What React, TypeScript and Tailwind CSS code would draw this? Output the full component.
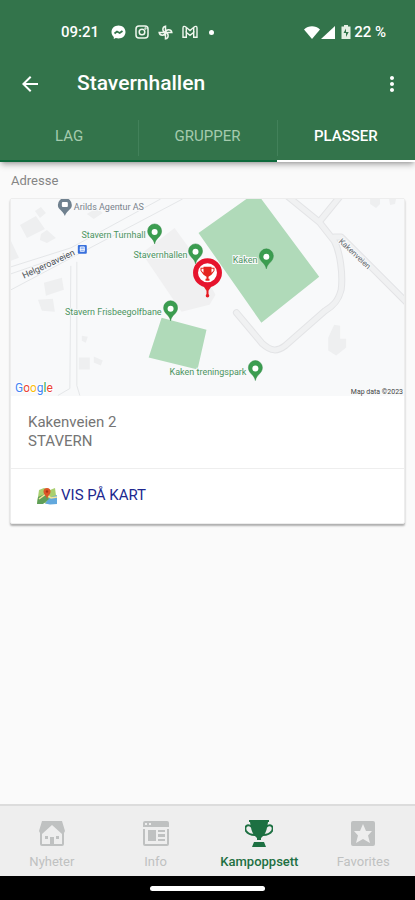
import React, { useState } from "react";
import { clsx } from "clsx";
import { MdArrowBack, MdMoreVert } from "react-icons/md";

const tabs = ["LAG", "GRUPPER", "PLASSER"];

type MapPin = {
  x: number;
  y: number;
  label: string;
  labelX: number;
};

// x and y are the tip of the pin, labelX is where its label ends
const pins: MapPin[] = [
  { x: 144, y: 45, label: "Stavern Turnhall", labelX: 135 },
  { x: 185, y: 65, label: "Stavernhallen", labelX: 177 },
  { x: 160, y: 122, label: "Stavern Frisbeegolfbane", labelX: 151 },
  { x: 256, y: 70, label: "Kaken", labelX: 247 },
  { x: 245, y: 182, label: "Kaken treningspark", labelX: 236 },
];

const StatusBar = () => (
  <div className="flex items-center justify-between pl-[61px] pr-[29px] h-14 pt-2">
    <div className="flex items-center">
      <span className="text-[15px] font-medium w-[50px]">09:21</span>
      <div className="flex items-center gap-[9px]">
        <svg width="15" height="15" viewBox="0 0 15 15" aria-hidden="true">
          <path d="M7.5.5C3.5.5.5 3.3.5 7c0 2 .9 3.700 2.300 4.900V14l2-.9c.8.300 1.800.4 2.700.4 4 0 7-2.800 7-6.500S11.500.5 7.500.5z" fill="#fff" />
          <path d="m3.500 8.500 2.500-2 2.700 1.500L11.500 6" fill="none" stroke="#33744b" strokeWidth="1.800" />
        </svg>
        <svg width="14" height="14" viewBox="0 0 14 14" fill="none" stroke="#f0f7ee" strokeWidth="1.500" aria-hidden="true">
          <rect x="1" y="1" width="12" height="12" rx="3" />
          <circle cx="7" cy="7" r="2.800" />
          <circle cx="10.500" cy="3.500" r=".4" />
        </svg>
        <svg width="15" height="15" viewBox="0 0 15 15" fill="none" stroke="#f0f7ee" strokeWidth="1.500" aria-hidden="true">
          <path d="M7.500 7.500V1.200A3.200 3.200 0 0 0 7.500 7.500zM7.500 7.500h6.300A3.200 3.200 0 0 0 7.500 7.500zM7.500 7.500v6.300A3.200 3.200 0 0 0 7.500 7.500zM7.500 7.500H1.200A3.200 3.200 0 0 0 7.500 7.500z" />
        </svg>
        <svg width="16" height="14" viewBox="0 0 16 14" fill="none" stroke="#f0f7ee" strokeWidth="1.400" aria-hidden="true">
          <path d="M1 12.300V3c0-1.800 1.500-2 2.500-1.200L8 5.500l4.500-3.700C13.500 1 15 1.200 15 3v9.300h-3.300V7.500L8 10.300 4.300 7.500v4.800z" />
          <path d="M4.300 7.500V2.500M11.700 7.500V2.500" />
        </svg>
        <span className="size-[5px] rounded-full bg-white ml-[2px]" />
      </div>
    </div>
    <div className="flex items-center">
      <svg width="16" height="13" viewBox="0 0 16 13" aria-hidden="true">
        <path d="M8 13 0 3.500C4.500-.8 11.500-.8 16 3.500z" fill="#fff" />
      </svg>
      <svg width="14" height="13" viewBox="0 0 14 13" className="ml-px" aria-hidden="true">
        <path d="M14 0v13H0z" fill="#fff" />
      </svg>
      <svg width="10" height="14" viewBox="0 0 10 14" className="ml-[6px] mr-[3px]" aria-hidden="true">
        <path d="M3 0h4v1.500h2.500V14h-9V1.500H3z" fill="#e6efe4" />
        <path d="M5 3.500 2.500 8H5v4l2.700-5H5z" fill="#33744b" />
      </svg>
      <span className="text-[15px] font-medium">22 %</span>
    </div>
  </div>
);

const PlaceMap = () => (
  <svg
    viewBox="0 0 394 197"
    className="block w-full h-auto bg-[#f8f9fa]"
    role="img"
    aria-label="Kart over Stavernhallen"
    fontFamily="Roboto, sans-serif"
  >
    {/* Buildings */}
    <g fill="#eeeff0">
      <path d="M9 26 25 17l9 13-18 9zM24 12l6-4 5 6-6 5zM30 35l6-4 9 8-9 5-7-3zM0 42l8 17-8 3zM33 84l18-5 2 12-18 6zM27 101l15-1 2 13-13-1zM68 159h11v12H68zM83 158l9 4-2 5-7-3zM71 137l6 1-2 6-4-2zM76 15l10-6 6 5-9 6z" />
      <path d="M318 139l6-13 6 1v13h6v9l-10 8-8-5zM360 0h10v5l-4 4-6-4zM379 0h7l-1 5-5 1z" />
    </g>
    <path d="m133 53 31-24 18 25 23 42-6 10-28 7-36-53z" fill="#f0f0f1" />

    {/* Roads */}
    <g fill="none" stroke="#e4e6e8" strokeWidth="1">
      <path d="M0 68 60 49 150 0M0 91 172 0M60 67l-1 123-12 7M66 63v124l3 10M0 75l58-20" />
    </g>
    <g fill="none" strokeLinecap="round" strokeLinejoin="round">
      <path
        d="M277-3 309 23 324 42c6 11 9 34 7 49-3 12-9 17-16 21l-40 35c-8 6-14 6-23-2l-26-31M331-4l-22 27M324 38h7l68 68"
        stroke="#e3e4e6"
        strokeWidth="7"
      />
      <path
        d="M277-3 309 23 324 42c6 11 9 34 7 49-3 12-9 17-16 21l-40 35c-8 6-14 6-23-2l-26-31M331-4l-22 27M324 38h7l68 68"
        stroke="#f0f1f2"
        strokeWidth="5"
      />
    </g>

    {/* Pitches */}
    <path d="M188 34 236 0h15l58 78-58 46zM151 119l45 12-9 40-49-12z" fill="#b0dab9" />

    <g fontSize="9" stroke="#f8f9fa" strokeWidth="2" paintOrder="stroke">
      <text x="0" y="0" fill="#50555a" transform="translate(13 80) rotate(-25)">
        Helgeroaveien
      </text>
      <text x="0" y="0" fontSize="8" fill="#666b70" transform="translate(328 43) rotate(43)">
        Kakenveien
      </text>
      <text x="63" y="11" fill="#78828c">
        Arilds Agentur AS
      </text>
      {pins.map((pin) => (
        <text
          key={pin.label}
          x={pin.labelX}
          y={pin.y - 6}
          textAnchor="end"
          fill="#4b9460"
        >
          {pin.label}
        </text>
      ))}
      <text x="393" y="195" fontSize="7" textAnchor="end" fill="#444">
        Map data ©2023
      </text>
    </g>

    <g transform="translate(54 17)">
      <path d="M0 0C-2-6-7-6-7-11a7 7 0 0 1 14 0c0 5-5 5-7 11z" fill="#70818f" />
      <rect x="-3" y="-14" width="6" height="5" rx="1" fill="#fff" />
    </g>
    {pins.map((pin) => (
      <g key={pin.label} transform={`translate(${pin.x} ${pin.y})`}>
        <path
          d="M0 0C-1-6-7-7-7-13a7 7 0 0 1 14 0c0 6-6 7-7 13z"
          fill="#3b9d50"
          stroke="#2f8743"
          strokeWidth=".5"
        />
        <circle cy="-12" r="3" fill="#fff" />
      </g>
    ))}

    {/* Bus stop */}
    <rect x="67" y="46" width="9" height="9" rx="1" fill="#3870dc" />
    <path d="M69.500 48h4v4.500h-4zM69 50.500h5" fill="#8fb2f4" stroke="#fff" strokeWidth=".8" />

    {/* Hall marker */}
    <g transform="translate(197 74)">
      <path d="M-5 12H5L1 18v5h-2v-5z" fill="#e51b23" />
      <circle r="12" fill="#fff" stroke="#e6142d" strokeWidth="5" />
      <path
        d="M-4-6h8v1h3v3L4 2 1 4v2h1v2h-4V6h1V4l-3-2-3-4v-3h3zM-6-4v2l2 2v-4zM6-4v2L4 0v-4z"
        fill="#e5261f"
        fillRule="evenodd"
      />
      <circle cy="23" r="1.800" fill="#e51b23" />
    </g>

    <text x="4" y="193" fontSize="12" stroke="#fff" strokeWidth="2" paintOrder="stroke">
      <tspan fill="#4285f4">G</tspan>
      <tspan fill="#ea4335">o</tspan>
      <tspan fill="#fbbc05">o</tspan>
      <tspan fill="#4285f4">g</tspan>
      <tspan fill="#34a853">l</tspan>
      <tspan fill="#ea4335">e</tspan>
    </text>
  </svg>
);

const MapIcon = () => (
  <svg width="20" height="18" viewBox="0 0 20 18" aria-hidden="true">
    <path d="M2 3 7 1l6 2 5-2 2 15-7 1-6-1-7 1z" fill="#a9cf6f" />
    <path d="M12 11 20 8v9l-7 .5-5-1z" fill="#62a8dd" />
    <path d="M1 10 8 7l4 5-6 5H0z" fill="#5f9e58" />
    <path d="m2 12 7-5 5 4 6-1" fill="none" stroke="#f4e49a" strokeWidth="1.500" />
    <path d="M10 12C9 8 6.500 7.500 6.500 4.500a3.500 3.500 0 0 1 7 0C13.500 7.500 11 8 10 12z" fill="#dd5528" />
    <circle cx="10" cy="4.500" r="1.200" fill="#a83216" />
  </svg>
);

const navItems = [
  {
    label: "Nyheter",
    icon: (
      <>
        <path
          fillRule="evenodd"
          d="M4 1h20l3 10-1 2v11q0 2-2 2H4q-2 0-2-2V13l-1-2zM14 5 4 14v10h20V14z"
        />
        <path d="M12 17h4v8h-4zM7 16h3v3H7zM18 16h3v3h-3z" />
      </>
    ),
  },
  {
    label: "Info",
    icon: (
      <>
        <path fillRule="evenodd" d="M3 1h22q2 0 2 2v4H1V3q0-2 2-2zm0 2v2h2V3zm4 0v2h2V3z" />
        <path fillRule="evenodd" d="M1 9h26v15q0 2-2 2H3q-2 0-2-2zm2 0v15h22V9z" />
        <path d="M6 10h8v11H6zM16 10h7v2h-7zM16 14h7v3h-7zM16 19h7v2h-7z" />
      </>
    ),
  },
  {
    label: "Kampoppsett",
    icon: (
      <>
        <path d="M4 0h20v2h-1q-1 9-4 13l-3 3v2h-4v-2l-3-3Q6 11 5 2H4zM9 22h10l2 5H7z" />
        <path
          d="M7 7C2 3-1 7 1 11c2 3 5 4 9 4M21 7c5-4 8 0 6 4-2 3-5 4-9 4"
          fill="none"
          stroke="currentColor"
          strokeWidth="2"
        />
      </>
    ),
  },
  {
    label: "Favorites",
    icon: (
      <path
        fillRule="evenodd"
        d="M4 1h20q2 0 2 2v21q0 2-2 2H4q-2 0-2-2V3q0-2 2-2zm10 3-3 7H5l4 4.500L7 23l7-4 7 4-2-7.500 4-4.500h-6z"
      />
    ),
  },
];

const App = () => {
  const [activeTab, setActiveTab] = useState("PLASSER");
  const [activeNav, setActiveNav] = useState("Kampoppsett");

  return (
    <div className="flex flex-col min-h-screen bg-[#fafafa] font-[Roboto,sans-serif]">
      <header className="relative bg-[#33744b] text-white shadow-md shadow-black/25">
        <StatusBar />
        <div className="flex items-center h-14 pl-[18px] pr-[11px]">
          <button type="button" aria-label="Tilbake">
            <MdArrowBack size={24} />
          </button>
          <h1 className="text-[21px] font-medium ml-[35px] grow">Stavernhallen</h1>
          <button type="button" aria-label="Meny">
            <MdMoreVert size={24} />
          </button>
        </div>
        <nav className="grid grid-cols-3 h-[50px]">
          {tabs.map((tab) => (
            <button
              key={tab}
              type="button"
              onClick={() => setActiveTab(tab)}
              className={clsx(
                "relative text-[15px] border-b-2",
                activeTab === tab
                  ? "text-white border-white font-medium"
                  : "text-[#a5cbae] border-[#0d693b]"
              )}
            >
              {tab}
              {tab !== "LAG" && (
                <span className="absolute left-0 top-2 bottom-1 w-px bg-[#42815a]" />
              )}
            </button>
          ))}
        </nav>
      </header>

      <main className="grow px-[10px] pt-[10px]">
        <h2 className="text-[13px] leading-[18px] text-[#858585] pl-px mb-2">Adresse</h2>
        <section className="bg-white rounded-xs border border-[#ededed] shadow-[0_2px_2px_rgba(0,0,0,0.3)] overflow-hidden">
          <PlaceMap />
          <address className="not-italic text-[15px] leading-[19px] text-[#757575] px-[17px] pt-[17px] pb-[17px] border-b border-[#eeeeee]">
            Kakenveien 2
            <br />
            STAVERN
          </address>
          <a
            href="#kart"
            className="flex items-center gap-1 h-[54px] px-[26px] text-[15px] text-[#20288f]"
          >
            <MapIcon />
            VIS PÅ KART
          </a>
        </section>
      </main>

      <nav className="grid grid-cols-4 h-[72px] bg-[#eeeeee] border-t-2 border-[#dcdcdc]">
        {navItems.map((item) => (
          <button
            key={item.label}
            type="button"
            onClick={() => setActiveNav(item.label)}
            className={clsx(
              "flex flex-col items-center pt-[14px] text-[13px] leading-4",
              activeNav === item.label
                ? "text-[#1d7042] font-medium"
                : "text-[#bfc1c1]"
            )}
          >
            <svg width="28" height="28" viewBox="0 0 28 28" fill="currentColor" className="mb-[6px]" aria-hidden="true">
              {item.icon}
            </svg>
            {item.label}
          </button>
        ))}
      </nav>
      <div className="flex justify-center items-center h-6 bg-black">
        <span className="w-[115px] h-[5px] rounded-full bg-white" />
      </div>
    </div>
  );
};

export default App;
